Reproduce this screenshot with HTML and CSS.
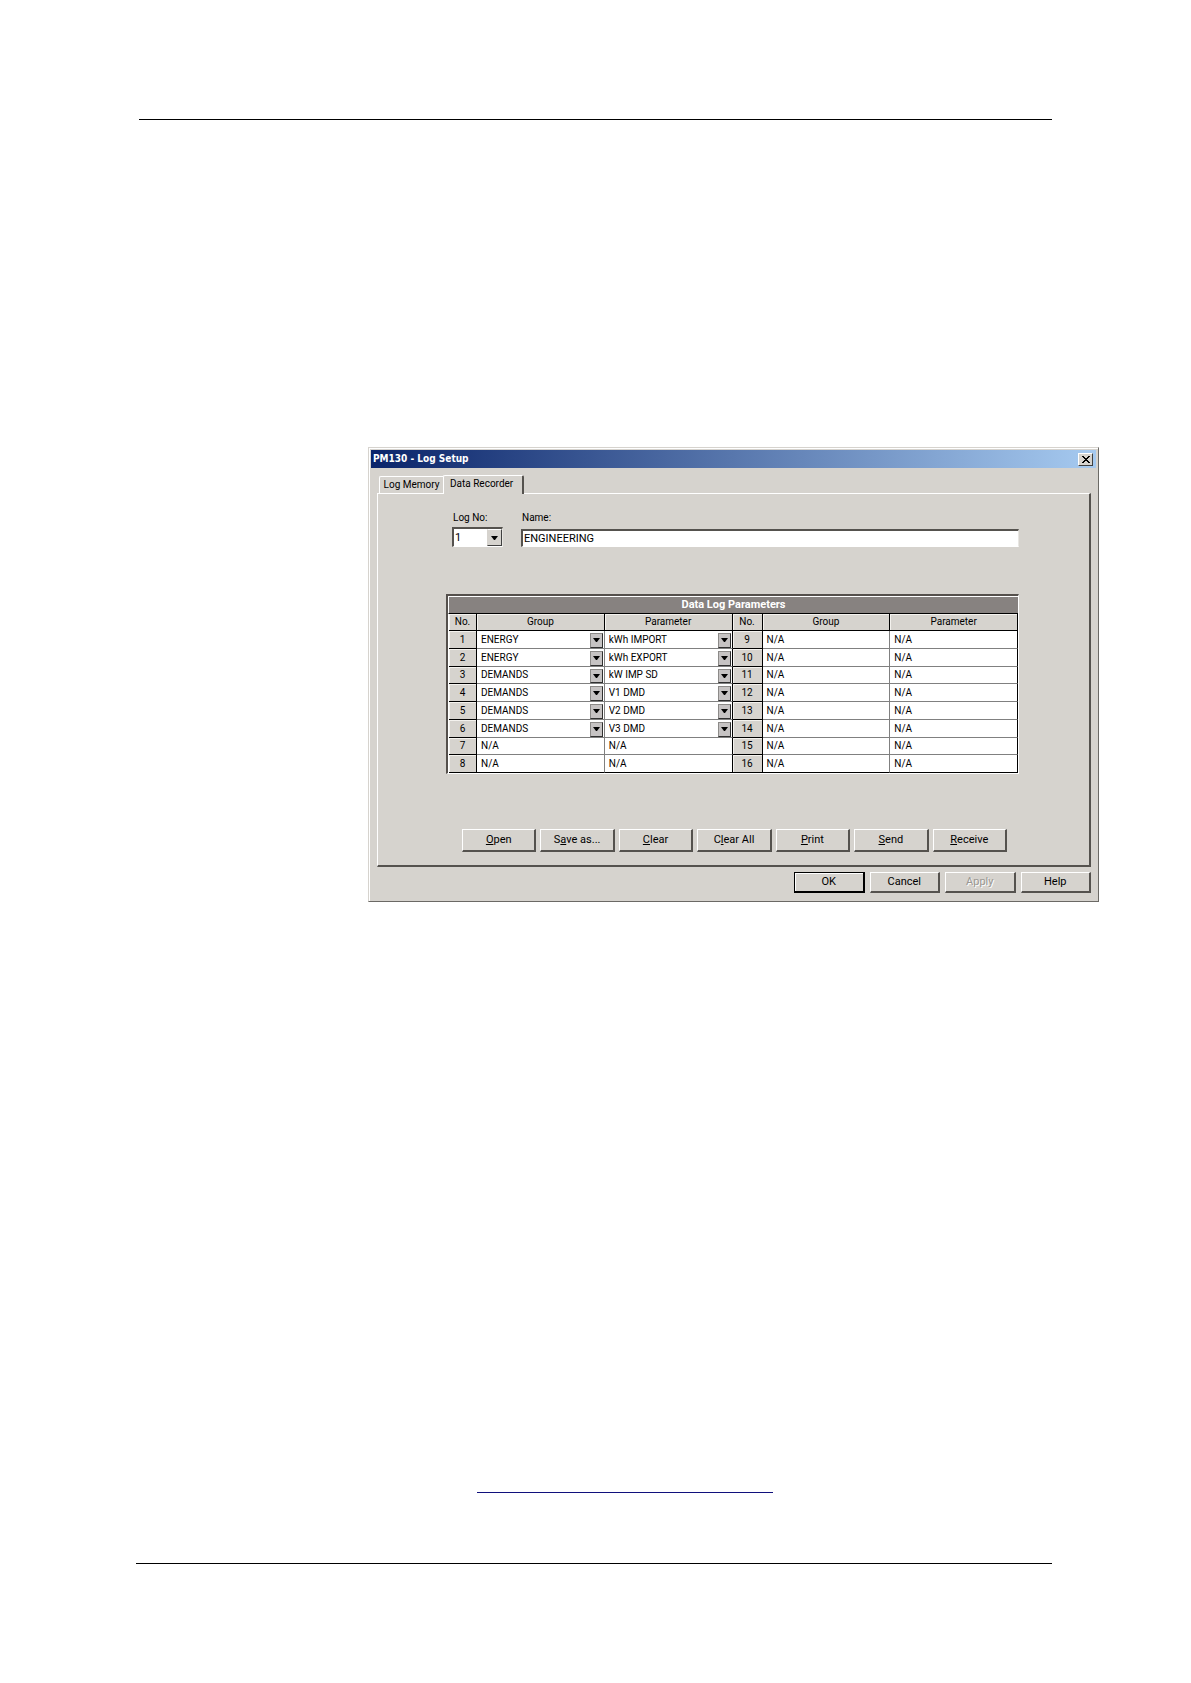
FILE: index.html
```html
<!DOCTYPE html>
<html lang="en">
<head>
<meta charset="utf-8">
<title>PM130 - Log Setup</title>
<link rel="stylesheet" href="styles.css">
</head>
<body>
<hr class="rule rule-top">
<main>
  <section class="dialog" aria-labelledby="dialog-title">
    <header class="titlebar">
      <h1 id="dialog-title">PM130 - Log Setup</h1>
      <button class="close" type="button" aria-label="Close">
        <svg width="8" height="7" viewBox="0 0 8 7" shape-rendering="crispEdges"><path d="M0 0h2v1h1v1h2v-1h1v-1h2v1h-1v1h-1v1h-1v1h1v1h1v1h1v1h-2v-1h-1v-1h-2v1h-1v1h-2v-1h1v-1h1v-1h1v-1h-1v-1h-1v-1h-1z"/></svg>
      </button>
    </header>
    <div class="tabs" role="tablist">
      <button class="tab" type="button" role="tab" aria-selected="false">Log Memory</button>
      <button class="tab tab-active" type="button" role="tab" aria-selected="true">Data Recorder</button>
    </div>
    <div class="panel" role="tabpanel">
      <div class="fields">
        <div class="field field-no">
          <label for="log-no">Log No:</label>
          <div class="combo combo-sunken">
            <select id="log-no"><option>1</option></select>
            <span class="arrow"><svg width="7" height="4" viewBox="0 0 7 4"><path d="M0 0h7L4 4H3z"/></svg></span>
          </div>
        </div>
        <div class="field field-name">
          <label for="log-name">Name:</label>
          <input id="log-name" type="text" value="ENGINEERING">
        </div>
      </div>
      <div class="grid-frame">
        <table>
          <caption>Data Log Parameters</caption>
          <colgroup><col class="col-no"><col><col><col class="col-no-wide"><col><col></colgroup>
          <thead>
            <tr><th>No.</th><th>Group</th><th>Parameter</th><th>No.</th><th>Group</th><th>Parameter</th></tr>
          </thead>
          <tbody>
            <tr><th>1</th>
              <td><div class="combo"><select aria-label="Group 1"><option>ENERGY</option></select><span class="arrow"><svg width="7" height="4" viewBox="0 0 7 4"><path d="M0 0h7L4 4H3z"/></svg></span></div></td>
              <td><div class="combo"><select aria-label="Parameter 1"><option>kWh IMPORT</option></select><span class="arrow"><svg width="7" height="4" viewBox="0 0 7 4"><path d="M0 0h7L4 4H3z"/></svg></span></div></td>
              <th>9</th><td>N/A</td><td>N/A</td></tr>
            <tr><th>2</th>
              <td><div class="combo"><select aria-label="Group 2"><option>ENERGY</option></select><span class="arrow"><svg width="7" height="4" viewBox="0 0 7 4"><path d="M0 0h7L4 4H3z"/></svg></span></div></td>
              <td><div class="combo"><select aria-label="Parameter 2"><option>kWh EXPORT</option></select><span class="arrow"><svg width="7" height="4" viewBox="0 0 7 4"><path d="M0 0h7L4 4H3z"/></svg></span></div></td>
              <th>10</th><td>N/A</td><td>N/A</td></tr>
            <tr><th>3</th>
              <td><div class="combo"><select aria-label="Group 3"><option>DEMANDS</option></select><span class="arrow"><svg width="7" height="4" viewBox="0 0 7 4"><path d="M0 0h7L4 4H3z"/></svg></span></div></td>
              <td><div class="combo"><select aria-label="Parameter 3"><option>kW IMP SD</option></select><span class="arrow"><svg width="7" height="4" viewBox="0 0 7 4"><path d="M0 0h7L4 4H3z"/></svg></span></div></td>
              <th>11</th><td>N/A</td><td>N/A</td></tr>
            <tr><th>4</th>
              <td><div class="combo"><select aria-label="Group 4"><option>DEMANDS</option></select><span class="arrow"><svg width="7" height="4" viewBox="0 0 7 4"><path d="M0 0h7L4 4H3z"/></svg></span></div></td>
              <td><div class="combo"><select aria-label="Parameter 4"><option>V1 DMD</option></select><span class="arrow"><svg width="7" height="4" viewBox="0 0 7 4"><path d="M0 0h7L4 4H3z"/></svg></span></div></td>
              <th>12</th><td>N/A</td><td>N/A</td></tr>
            <tr><th>5</th>
              <td><div class="combo"><select aria-label="Group 5"><option>DEMANDS</option></select><span class="arrow"><svg width="7" height="4" viewBox="0 0 7 4"><path d="M0 0h7L4 4H3z"/></svg></span></div></td>
              <td><div class="combo"><select aria-label="Parameter 5"><option>V2 DMD</option></select><span class="arrow"><svg width="7" height="4" viewBox="0 0 7 4"><path d="M0 0h7L4 4H3z"/></svg></span></div></td>
              <th>13</th><td>N/A</td><td>N/A</td></tr>
            <tr><th>6</th>
              <td><div class="combo"><select aria-label="Group 6"><option>DEMANDS</option></select><span class="arrow"><svg width="7" height="4" viewBox="0 0 7 4"><path d="M0 0h7L4 4H3z"/></svg></span></div></td>
              <td><div class="combo"><select aria-label="Parameter 6"><option>V3 DMD</option></select><span class="arrow"><svg width="7" height="4" viewBox="0 0 7 4"><path d="M0 0h7L4 4H3z"/></svg></span></div></td>
              <th>14</th><td>N/A</td><td>N/A</td></tr>
            <tr><th>7</th><td>N/A</td><td>N/A</td><th>15</th><td>N/A</td><td>N/A</td></tr>
            <tr><th>8</th><td>N/A</td><td>N/A</td><th>16</th><td>N/A</td><td>N/A</td></tr>
          </tbody>
        </table>
      </div>
      <div class="actions">
        <button class="btn" type="button"><u>O</u>pen</button>
        <button class="btn" type="button">S<u>a</u>ve as...</button>
        <button class="btn" type="button"><u>C</u>lear</button>
        <button class="btn" type="button">C<u>l</u>ear All</button>
        <button class="btn" type="button"><u>P</u>rint</button>
        <button class="btn" type="button"><u>S</u>end</button>
        <button class="btn" type="button"><u>R</u>eceive</button>
      </div>
    </div>
    <footer class="dialog-buttons">
      <button class="btn btn-default" type="button">OK</button>
      <button class="btn" type="button">Cancel</button>
      <button class="btn" type="button" disabled>Apply</button>
      <button class="btn" type="button">Help</button>
    </footer>
  </section>
  <hr class="link-line">
</main>
<hr class="rule rule-bottom">
</body>
</html>
```
FILE: styles.css
```css
* {
  box-sizing: border-box;
}

body {
  margin: 0;
  padding: 119px 139px 118px 136px;
  background: #fff;
  color: #000;
  font: 11px/14px Roboto, "Liberation Sans", sans-serif;
}

button,
input,
select {
  font: inherit;
  color: inherit;
  border-radius: 0;
}

.rule {
  height: 1px;
  margin: 0;
  border: 0;
  background: #000;
}

.rule-top {
  margin-left: 3px;
}

.link-line {
  width: 296px;
  height: 1px;
  margin: 590px 0 70px 341px;
  border: 0;
  background: #10107c;
}

/* Dialog window */
.dialog {
  margin: 327px -47px 0 232px;
  padding: 1px 1px 8px;
  background: #d6d3ce;
  border: 1px solid;
  border-color: #d6d3ce #6b6965 #6b6965 #d6d3ce;
  box-shadow: inset 1px 1px #fff;
}

.titlebar {
  display: flex;
  align-items: center;
  justify-content: space-between;
  height: 18px;
  margin: 1px;
  padding: 0 3px 0 2px;
  background: linear-gradient(90deg, #0a246a, #a6caf0);
}

.titlebar h1 {
  margin: 0;
  color: #fff;
  font: bold 10px/14px "DejaVu Sans Condensed", "DejaVu Sans", sans-serif;
}

.close {
  display: grid;
  place-items: center;
  width: 15px;
  height: 13px;
  padding: 0;
  background: #d6d3ce;
  border: 1px solid;
  border-color: #fff #404040 #404040 #fff;
}

/* Tabs */
.tabs {
  display: flex;
  align-items: flex-end;
  margin: 7px 9px 0;
  font-size: 10px;
}

.tab {
  height: 17px;
  width: 64px;
  padding: 0;
  background: #d6d3ce;
  border: 1px solid #fff;
  border-width: 1px 0 0 1px;
  border-radius: 2px 0 0 0;
}

.tab-active {
  z-index: 1;
  width: 81px;
  height: 19px;
  margin-bottom: -1px;
  padding: 0 6px 3px;
  text-align: left;
  border-right: 2px solid #55524e;
  border-radius: 2px 2px 0 0;
}

.panel {
  margin: 0 6px 0 7px;
  padding: 17px 70px 13px 74px;
  border: 1px solid #fff;
  border-right: 2px solid #55524e;
  border-bottom: 2px solid #55524e;
}

.fields {
  display: flex;
  gap: 18px;
}

.field {
  display: flex;
  flex-direction: column;
  gap: 4px;
}

.field label {
  padding-left: 1px;
  font-size: 10px;
}

.field-no {
  width: 51px;
  gap: 2px;
}

.field-name {
  flex: 1;
}

.field input {
  width: 100%;
  height: 18px;
  padding: 0 1px;
  background: #fff;
  border: 2px solid;
  border-width: 2px 1px 1px 2px;
  border-color: #55524e #e8e6e2 #fff #55524e;
}

/* Drop-downs */
.combo {
  position: relative;
  display: flex;
  height: 16px;
}

.combo select {
  width: 100%;
  padding: 0 16px 0 4px;
  background: #fff;
  border: 0;
  appearance: none;
}

.combo-sunken {
  height: 20px;
  border: 2px solid;
  border-width: 2px 1px 1px 2px;
  border-color: #55524e #e8e6e2 #fff #55524e;
}

.combo-sunken select {
  padding-left: 1px;
}

.arrow {
  position: absolute;
  top: 1px;
  right: 1px;
  bottom: 0;
  display: grid;
  place-items: center;
  width: 13px;
  background: #c6c3c3;
  border: 1px solid;
  border-color: #8c8a88 #303030 #303030 #8c8a88;
  pointer-events: none;
}

.combo-sunken .arrow {
  top: 0;
  right: 0;
  width: 15px;
  background: #d6d3ce;
  border-color: #fff #404040 #404040 #d6d3ce;
}

/* Parameter table */
.grid-frame {
  margin: 47px 0 0 -6px;
  border: 2px solid;
  border-width: 2px 1px 1px 2px;
  border-color: #55504c #fff #fff #55504c;
}

table {
  width: 100%;
  table-layout: fixed;
  border-collapse: separate;
  border-spacing: 0;
  border-left: 1px solid #fff;
  font-size: 10px;
  line-height: 12px;
}

caption {
  height: 18px;
  color: #fff;
  background: #878280;
  border: 1px solid #fff;
  border-width: 1px 0 1px 1px;
  border-bottom-color: #000;
  font-size: 11px;
  font-weight: bold;
  line-height: 16px;
}

.col-no {
  width: 28px;
}

.col-no-wide {
  width: 30px;
}

th,
td {
  height: 18px;
  padding: 0;
  border: 1px solid #808080;
  border-width: 0 1px 1px 0;
}

th {
  background: #d6d3ce;
  border-color: #000;
  font-weight: normal;
  box-shadow: inset 1px 1px #f4f2ee;
}

thead th {
  height: 17px;
}

tbody tr:nth-child(4n + 3) > * {
  height: 17px;
}

tbody tr:nth-child(4n + 3) .combo {
  height: 15px;
}

td {
  padding-left: 4px;
  background: #fff;
}

td:has(.combo) {
  padding-left: 0;
}

td:nth-child(3),
td:last-child {
  border-right-color: #000;
}

tbody tr:last-child > * {
  border-bottom-color: #000;
}

/* Buttons */
.btn {
  padding: 0;
  background: #d6d3ce;
  border: 1px solid #fff;
  border-right: 2px solid #55524e;
  border-bottom: 2px solid #55524e;
}

.btn-default {
  border-color: #000;
  box-shadow: inset 1px 1px #fff;
}

.btn:disabled {
  color: #9a9792;
  text-shadow: 1px 1px #fff;
}

.actions {
  display: grid;
  grid-template-columns: repeat(7, 1fr);
  gap: 4px;
  margin: 55px 12px 0 10px;
}

.actions .btn {
  height: 23px;
}

.dialog-buttons {
  display: grid;
  grid-template-columns: repeat(4, 1fr);
  gap: 5px;
  width: 297px;
  margin: 5px 6px 0 auto;
}

.dialog-buttons .btn {
  height: 21px;
}
```
